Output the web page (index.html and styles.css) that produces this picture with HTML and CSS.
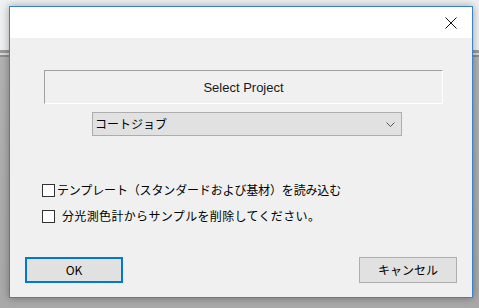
FILE: index.html
```html
<!DOCTYPE html>
<html lang="ja">
<head>
    <meta charset="UTF-8">
    <title>Select Project</title>
    <link rel="stylesheet" href="styles.css">
</head>
<body>
    <div class="desktop">
        <div class="window">
            <div class="titlebar">
                <span class="close">
                    <svg width="12" height="12" viewBox="0 0 12 12">
                        <path d="M0.5 0.5 L11.5 11.5 M11.5 0.5 L0.5 11.5" stroke="#111" stroke-width="1" fill="none"/>
                    </svg>
                </span>
            </div>
            <div class="content">
                <div class="project-box">Select Project</div>
                <div class="dropdown">
                    <span class="dropdown-text">コートジョブ</span>
                    <svg class="chevron" width="9" height="5" viewBox="0 0 9 5">
                        <path d="M0.5 0.5 L4.5 4.5 L8.5 0.5" stroke="#555" stroke-width="1" fill="none"/>
                    </svg>
                </div>
                <div class="options">
                    <label class="check-row">
                        <span class="box"></span>
                        <span class="label">テンプレート（スタンダードおよび基材）を読み込む</span>
                    </label>
                    <label class="check-row">
                        <span class="box"></span>
                        <span class="label spaced">分光測色計からサンプルを削除してください。</span>
                    </label>
                </div>
                <div class="buttons">
                    <button class="btn btn-default">OK</button>
                    <button class="btn">キャンセル</button>
                </div>
            </div>
        </div>
    </div>
</body>
</html>
```

FILE: styles.css
```css
html, body {
    margin: 0;
    padding: 0;
}
body {
    width: 479px;
    height: 308px;
    overflow: hidden;
    font-family: "Noto Sans CJK JP", "Noto Sans", sans-serif;
    font-size: 12px;
    color: #000;
    background: linear-gradient(to bottom,
        #eef0f2 0px, #eef0f2 50px,
        #9a9a9a 50px, #9a9a9a 53px,
        #d8d8d8 53px, #d8d8d8 55px,
        #8c8c8c 55px, #8c8c8c 57px,
        #b2b2b2 57px, #a9a9a9 308px);
}
.desktop {
    padding: 6px 0 0 9px;
}
.window {
    width: 462px;
    height: 290px;
    border: 1px solid #3c82c8;
    background-color: #f0f0f0;
    box-shadow: 0 0 8px rgba(0, 0, 0, 0.35);
    display: flex;
    flex-direction: column;
}
.titlebar {
    height: 31px;
    background-color: #fff;
    display: flex;
    justify-content: flex-end;
    align-items: center;
}
.close {
    display: flex;
    width: 12px;
    height: 12px;
    margin-right: 15px;
    margin-top: 1px;
}
.content {
    flex: 1;
    display: flex;
    flex-direction: column;
}
.project-box {
    margin: 32px 0 0 34px;
    width: 397px;
    height: 32px;
    border-top: 1px solid #a0a0a0;
    border-left: 1px solid #a0a0a0;
    border-right: 1px solid #fff;
    border-bottom: 1px solid #fff;
    display: flex;
    justify-content: center;
    align-items: center;
    font-family: "Liberation Sans", Arial, sans-serif;
    font-size: 13px;
    color: #1a1a1a;
}
.dropdown {
    margin: 8px 0 0 82px;
    width: 308px;
    height: 22px;
    border: 1px solid #adadad;
    background-color: #e1e1e1;
    display: flex;
    align-items: center;
    justify-content: space-between;
    padding: 0;
}
.dropdown-text {
    padding-left: 2px;
    line-height: 14px;
}
.chevron {
    margin-right: 6px;
}
.options {
    margin: 46px 0 0 32px;
    display: flex;
    flex-direction: column;
    gap: 10px;
}
.check-row {
    display: flex;
    align-items: center;
    height: 16px;
}
.box {
    width: 13px;
    height: 13px;
    border: 1px solid #333;
    background-color: #fff;
    box-sizing: border-box;
    margin-right: 2px;
}
.label {
    line-height: 16px;
    letter-spacing: -0.15px;
}
.label.spaced {
    padding-left: 5px;
    letter-spacing: 0.35px;
}
.buttons {
    margin: 33px 0 0 15px;
    width: 432px;
    display: flex;
    justify-content: space-between;
}
.btn {
    width: 98px;
    height: 26px;
    border: 1px solid #adadad;
    background-color: #e1e1e1;
    font-family: "Noto Sans CJK JP", sans-serif;
    font-size: 12px;
    color: #000;
    padding: 0;
    line-height: 14px;
}
.btn-default {
    border: 2px solid #0078d7;
}
```
